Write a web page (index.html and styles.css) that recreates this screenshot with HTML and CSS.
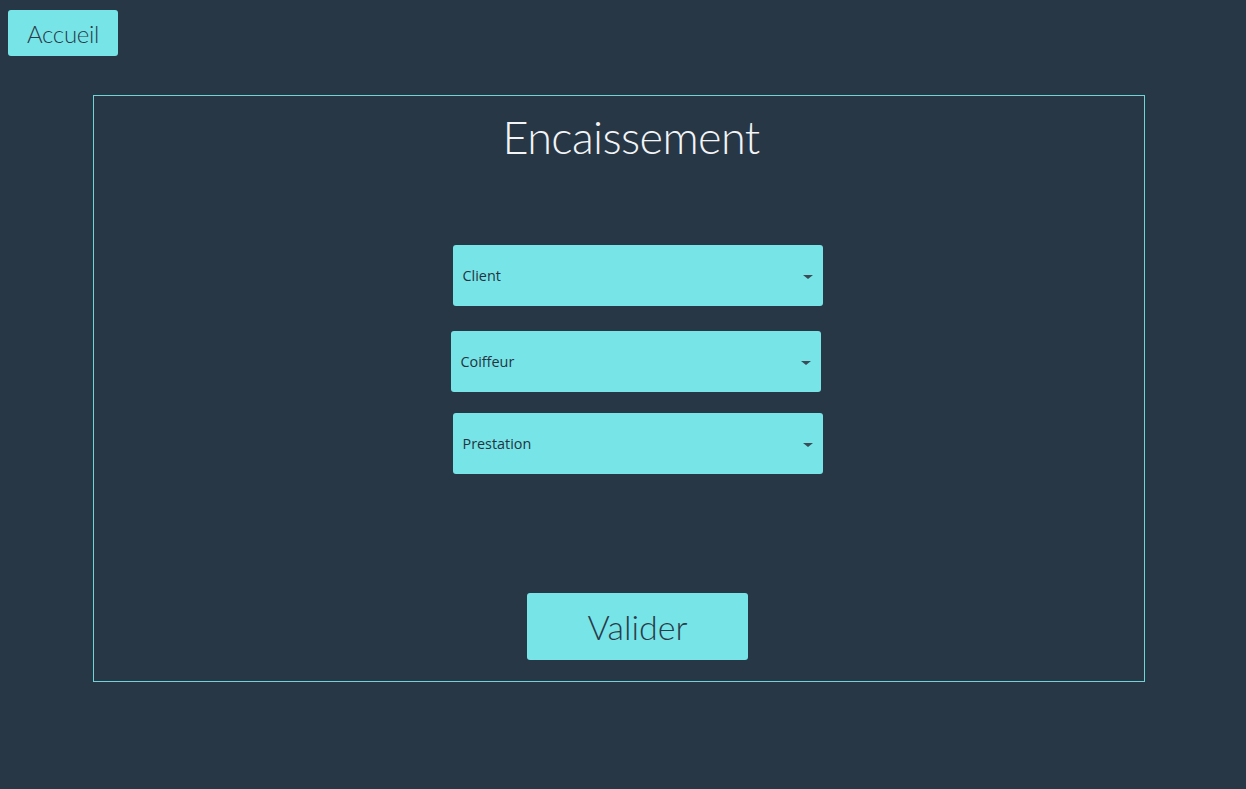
FILE: index.html
```html
<!DOCTYPE html>
<html lang="fr">
<head>
<meta charset="utf-8">
<title>Encaissement</title>
<link rel="stylesheet" href="styles.css">
</head>
<body>
  <button class="home-btn">Accueil</button>
  <section class="panel">
    <h1 class="title">Encaissement</h1>
    <div class="fields">
      <div class="select sel-client"><span>Client</span><span class="caret"></span></div>
      <div class="select sel-coiffeur"><span>Coiffeur</span><span class="caret"></span></div>
      <div class="select sel-prestation"><span>Prestation</span><span class="caret"></span></div>
    </div>
    <button class="validate-btn">Valider</button>
  </section>
</body>
</html>
```
FILE: styles.css
```css
html, body {
  margin: 0;
  padding: 0;
  background: #283746;
  height: 100%;
}
body {
  font-family: "Lato", "Liberation Sans", sans-serif;
  display: flex;
  flex-direction: column;
  align-items: flex-start;
}
button {
  font-family: "Lato", "Liberation Sans", sans-serif;
  border: none;
  cursor: pointer;
}
.home-btn {
  margin: 10px 0 0 8px;
  width: 110px;
  height: 46px;
  background: #77e5e8;
  border-radius: 3px;
  color: #2b3b49;
  font-size: 24px;
  font-weight: 300;
  letter-spacing: -0.3px;
  padding: 0;
}
.panel {
  margin: 39px 0 0 93px;
  width: 1050px;
  height: 585px;
  border: 1px solid #6fd3d8;
  box-sizing: content-box;
  display: flex;
  flex-direction: column;
  align-items: center;
}
.title {
  margin: 13px 0 0 24px;
  font-size: 45px;
  font-weight: 300;
  color: #f2f4f6;
  line-height: 56px;
  letter-spacing: -0.6px;
}
.fields {
  margin: 80px 0 0 37px;
  display: flex;
  flex-direction: column;
}
.select {
  width: 370px;
  height: 61px;
  box-sizing: border-box;
  background: #77e5e8;
  border-radius: 3px;
  display: flex;
  align-items: center;
  justify-content: space-between;
  padding: 0 10px 0 10px;
  font-family: "Open Sans", "Noto Sans", sans-serif;
  font-size: 14.4px;
  color: #24343f;
}
.sel-coiffeur {
  margin-top: 25px;
  transform: translateX(-2px);
}
.sel-prestation {
  margin-top: 21px;
}
.caret {
  width: 0;
  height: 0;
  border-left: 5px solid transparent;
  border-right: 5px solid transparent;
  border-top: 4px solid #3d4b57;
  margin-top: 2px;
}
.validate-btn {
  margin: 119px 0 0 37px;
  width: 221px;
  height: 67px;
  background: #77e5e8;
  border-radius: 3px;
  color: #2b3b49;
  font-size: 34px;
  font-weight: 300;
  padding: 0;
}
```
